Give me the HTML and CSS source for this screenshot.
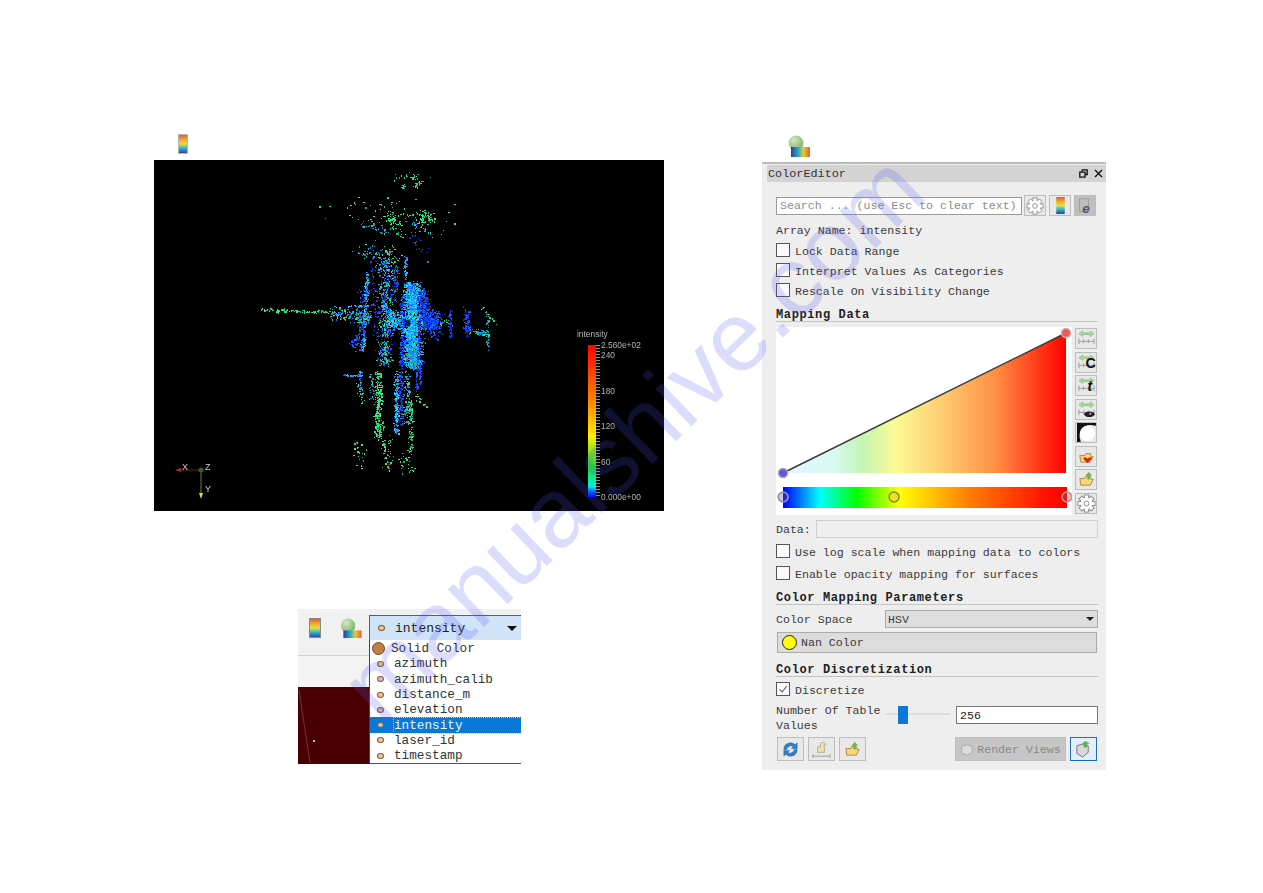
FILE: index.html
```html
<!DOCTYPE html>
<html lang="en">
<head>
<meta charset="utf-8">
<title>ColorEditor</title>
<link rel="stylesheet" href="styles.css">
</head>
<body>
<svg class="defs" width="0" height="0" aria-hidden="true">
  <defs>
    <linearGradient id="barIcon" x1="0" y1="0" x2="0" y2="1">
      <stop offset="0" stop-color="#d9593a"/><stop offset=".25" stop-color="#f2a32e"/><stop offset=".5" stop-color="#e9de3c"/><stop offset=".72" stop-color="#35b6c9"/><stop offset="1" stop-color="#2c3f9c"/>
    </linearGradient>
    <linearGradient id="mapIcon" x1="0" y1="0" x2="1" y2="0">
      <stop offset="0" stop-color="#2a3f9f"/><stop offset=".4" stop-color="#2fb0b8"/><stop offset=".65" stop-color="#e8c83c"/><stop offset="1" stop-color="#e2622e"/>
    </linearGradient>
    <radialGradient id="ballIcon" cx=".35" cy=".3" r=".8">
      <stop offset="0" stop-color="#d2eabf"/><stop offset="1" stop-color="#78ad66"/>
    </radialGradient>
    <linearGradient id="opacityFill" x1="783" y1="0" x2="1066" y2="0" gradientUnits="userSpaceOnUse">
      <stop offset="0" stop-color="#e8f2ff"/><stop offset=".17" stop-color="#dafbf6"/><stop offset=".28" stop-color="#c4f5b4"/><stop offset=".4" stop-color="#fbfb94"/><stop offset=".55" stop-color="#fdd074"/><stop offset=".75" stop-color="#ff9045"/><stop offset=".93" stop-color="#ff2a10"/><stop offset="1" stop-color="#ff0000"/>
    </linearGradient>
    <symbol id="gear" viewBox="-10 -10 20 20">
      <g fill="#fff" stroke="#8b8b8b" stroke-width="1">
        <rect x="-2.2" y="-9" width="4.4" height="5"/>
        <rect x="-2.2" y="-9" width="4.4" height="5" transform="rotate(45)"/>
        <rect x="-2.2" y="-9" width="4.4" height="5" transform="rotate(90)"/>
        <rect x="-2.2" y="-9" width="4.4" height="5" transform="rotate(135)"/>
        <rect x="-2.2" y="-9" width="4.4" height="5" transform="rotate(180)"/>
        <rect x="-2.2" y="-9" width="4.4" height="5" transform="rotate(225)"/>
        <rect x="-2.2" y="-9" width="4.4" height="5" transform="rotate(270)"/>
        <rect x="-2.2" y="-9" width="4.4" height="5" transform="rotate(315)"/>
        <circle r="6" stroke="none"/>
        <circle r="2.6"/>
      </g>
    </symbol>
    <symbol id="range" viewBox="0 0 20 20">
      <path d="M2 5 L6 2 V4 H14 V2 L18 5 L14 8 V6 H6 V8 Z" fill="#a9d69a" stroke="#86b878" stroke-width=".6"/>
      <path d="M2 10 V16 M2 13 H18 M7 11 V15 M12 11 V15 M18 10 V16" stroke="#9a9a9a" stroke-width="1" fill="none"/>
    </symbol>
    <symbol id="folder" viewBox="0 0 20 20">
      <path d="M4 16 L3 9 H8 L9 7 H14 L15 10 L17 10 L14 16 Z" fill="#f6d878" stroke="#a98a3c" stroke-width="1"/>
    </symbol>
  </defs>
</svg>

<div class="page">
  <div class="left-col">
    <div class="icon-row">
      <svg class="bar-icon" viewBox="0 0 10 20"><rect x=".5" y=".5" width="9" height="19" fill="url(#barIcon)" stroke="#b5b5b5"/></svg>
    </div>
    <div class="viewer">
      <canvas id="cloud" class="cloud" width="510" height="351"></canvas>
      <svg class="viewer-overlay" viewBox="0 0 510 351">
        <defs>
          <linearGradient id="legend" x1="0" y1="0" x2="0" y2="1">
            <stop offset="0" stop-color="#ff0000"/><stop offset=".36" stop-color="#ff8000"/><stop offset=".6" stop-color="#ffee00"/><stop offset=".8" stop-color="#20e020"/><stop offset=".93" stop-color="#00f0e0"/><stop offset=".97" stop-color="#0050ff"/><stop offset="1" stop-color="#0000ff"/>
          </linearGradient>
        </defs>
        <rect class="legend-bar" x="434" y="185" width="8" height="152" fill="url(#legend)"/>
        <line class="legend-ticks" x1="444" y1="185" x2="444" y2="337"/>
        <text class="legend-text" x="423" y="177">intensity</text>
        <text class="legend-text" x="447" y="188">2.560e+02</text>
        <text class="legend-text" x="447" y="198">240</text>
        <text class="legend-text" x="447" y="234">180</text>
        <text class="legend-text" x="447" y="269">120</text>
        <text class="legend-text" x="447" y="305">60</text>
        <text class="legend-text" x="447" y="340">0.000e+00</text>
        <line x1="23" y1="310" x2="47" y2="310" stroke="#7a1414" stroke-width="1"/>
        <path d="M21 310 L27 308 V312 Z" fill="#c02020"/>
        <line x1="47" y1="310" x2="47" y2="335" stroke="#77774a" stroke-width="1"/>
        <path d="M47 339 L45 333 H49 Z" fill="#e8e020"/>
        <circle cx="47" cy="310" r="2.5" fill="#1c6a24"/>
        <text class="axis-text" x="28" y="310">X</text>
        <text class="axis-text" x="51" y="310">Z</text>
        <text class="axis-text" x="51" y="332">Y</text>
      </svg>
    </div>
    <div class="shot">
      <div class="shot-side">
        <div class="shot-toolbar">
          <svg class="shot-bar" viewBox="0 0 12 20"><rect x=".5" y=".5" width="11" height="19" fill="url(#barIcon)" stroke="#8a8a8a"/></svg>
          <svg class="shot-map" viewBox="0 0 22 22"><circle cx="8" cy="8" r="7.5" fill="url(#ballIcon)"/><rect x="3" y="13" width="19" height="8" fill="url(#mapIcon)"/></svg>
        </div>
        <div class="shot-band"></div>
        <div class="shot-dark">
          <svg class="shot-dark-art" viewBox="0 0 71 77"><line x1="1" y1="3" x2="12" y2="76" stroke="#8a5a5a" stroke-width=".6"/><rect x="15" y="53" width="2" height="2" fill="#a8b8b8"/></svg>
        </div>
      </div>
      <div class="shot-menu">
        <div class="combo"><span class="dot"></span><span class="combo-text">intensity</span><span class="combo-arrow"></span></div>
        <ul class="list">
          <li class="item solid"><span class="solid-dot"></span>Solid Color</li>
          <li class="item"><span class="dot"></span>azimuth</li>
          <li class="item"><span class="dot pinkish"></span>azimuth_calib</li>
          <li class="item"><span class="dot"></span>distance_m</li>
          <li class="item"><span class="dot pinkish"></span>elevation</li>
          <li class="item selected"><span class="dot greyish"></span><span class="selected-text">intensity</span></li>
          <li class="item"><span class="dot"></span>laser_id</li>
          <li class="item"><span class="dot"></span>timestamp</li>
        </ul>
      </div>
    </div>
  </div>

  <div class="right-col">
    <svg class="map-icon" viewBox="0 0 22 22"><circle cx="8" cy="8" r="7.5" fill="url(#ballIcon)"/><rect x="3" y="12" width="19" height="10" fill="url(#mapIcon)"/></svg>
    <section class="panel">
      <header class="title-bar">
        <span>ColorEditor</span>
        <span class="title-icons">
          <svg class="float-icon" viewBox="0 0 9 9"><path d="M3 .8H8.2V5.5H6.5M.8 3.2H6V8.2H.8Z M3 .8V3 M.8 3.2H6" fill="none" stroke="#111" stroke-width="1.3"/></svg>
          <svg class="close-icon" viewBox="0 0 9 9"><path d="M1 1L8 8M8 1L1 8" stroke="#111" stroke-width="1.4"/></svg>
        </span>
      </header>
      <div class="panel-body">
        <div class="search-row">
          <div class="search">Search ... (use Esc to clear text)</div>
          <button class="btn b22"><svg class="ico18"><use href="#gear"/></svg></button>
          <button class="btn b22"><svg class="ico-bar" viewBox="0 0 10 20"><rect width="10" height="20" fill="url(#barIcon)"/></svg></button>
          <button class="btn b22 pressed"><svg class="ico18" viewBox="0 0 20 20"><rect x="4" y="2" width="10" height="14" fill="#bdbdbd" stroke="#9c9c9c"/><text class="e-glyph" x="7" y="18">e</text></svg></button>
        </div>
        <div class="text-row array">Array Name: intensity</div>
        <div class="check-row h20"><span class="check"></span>Lock Data Range</div>
        <div class="check-row h20"><span class="check"></span>Interpret Values As Categories</div>
        <div class="check-row h20"><span class="check"></span>Rescale On Visibility Change</div>
        <h2 class="heading h-map">Mapping Data</h2>

        <div class="chart-row">
          <div class="chart">
            <svg class="chart-svg" viewBox="776 327 296 188">
              <polygon points="783,473 1066,333 1066,473" fill="url(#opacityFill)"/>
              <line x1="783" y1="473" x2="1066" y2="333" stroke="#3a3a3a" stroke-width="1.5"/>
              <circle cx="783" cy="473" r="4.5" fill="#5a5ae0" stroke="#a5a5a5" stroke-width="1.5"/>
              <circle cx="1066" cy="333" r="4.5" fill="#f05a5a" stroke="#c8b0b0" stroke-width="1.5"/>
              <defs>
                <linearGradient id="ramp" x1="0" y1="0" x2="1" y2="0">
                  <stop offset="0" stop-color="#0000ff"/><stop offset=".13" stop-color="#00ffff"/><stop offset=".26" stop-color="#00ff00"/><stop offset=".41" stop-color="#ffff00"/><stop offset=".65" stop-color="#ff8000"/><stop offset=".93" stop-color="#ff1000"/><stop offset="1" stop-color="#ff0000"/>
                </linearGradient>
              </defs>
              <rect x="783" y="487" width="284" height="21" fill="url(#ramp)"/>
              <circle cx="783" cy="497" r="5" fill="#2a2ab8" stroke="#a0a0a0" stroke-width="1.5"/>
              <path d="M783 493a4 4 0 0 0 0 8z" fill="#c8c8e0"/>
              <circle cx="894" cy="497" r="5" fill="#e8e020" stroke="#8a8a40" stroke-width="1.5"/>
              <circle cx="1067" cy="497" r="5" fill="#e02020" stroke="#b0a0a0" stroke-width="1.5"/>
              <path d="M1067 493a4 4 0 0 1 0 8z" fill="#f0c0c0"/>
            </svg>
          </div>
          <div class="tools">
            <button class="btn tool"><svg class="ico20" viewBox="0 0 20 20"><use href="#range"/></svg></button>
            <button class="btn tool"><svg class="ico20" viewBox="0 0 20 20"><use href="#range"/><text class="tool-letter" x="9" y="16">C</text></svg></button>
            <button class="btn tool"><svg class="ico20" viewBox="0 0 20 20"><use href="#range"/><text class="tool-letter italic" x="11" y="16">t</text></svg></button>
            <button class="btn tool"><svg class="ico20" viewBox="0 0 20 20"><use href="#range"/><ellipse cx="13" cy="15" rx="5.5" ry="3" fill="#222"/><circle cx="14" cy="14.5" r="1" fill="#ccc"/></svg></button>
            <button class="btn tool"><svg class="ico20" viewBox="0 0 20 20"><path d="M0 20V0H20V3Q10 0 5 6Q1 12 4 20Z" fill="#111"/><circle cx="11" cy="11" r="8" fill="#fff"/></svg></button>
            <button class="btn tool"><svg class="ico20" viewBox="0 0 20 20"><use href="#folder"/><path d="M11 17 L7 13 Q6 10 9 11 L11 12 L13 11 Q17 10 15 13 Z" fill="#d8231e"/></svg></button>
            <button class="btn tool"><svg class="ico20" viewBox="0 0 20 20"><use href="#folder"/><path d="M11 10 V6 H8.5 L12.5 2 L16 6 H13.5 V10 Z" fill="#6db24e"/></svg></button>
            <button class="btn tool"><svg class="ico20"><use href="#gear"/></svg></button>
          </div>
        </div>

        <div class="data-row"><span class="data-label">Data:</span><div class="data-field"></div></div>
        <div class="check-row h22 first"><span class="check"></span>Use log scale when mapping data to colors</div>
        <div class="check-row h22"><span class="check"></span>Enable opacity mapping for surfaces</div>
        <h2 class="heading h-param">Color Mapping Parameters</h2>
        <div class="space-row">
          <span class="space-label">Color Space</span>
          <div class="select">HSV<span class="select-arrow"></span></div>
        </div>
        <div class="nan"><span class="nan-dot"></span>Nan Color</div>
        <h2 class="heading h-disc">Color Discretization</h2>
        <div class="check-row h20 disc"><span class="check"><svg class="tick" viewBox="0 0 14 14"><path d="M3 7.5L6 10.5L11.5 3.5" fill="none" stroke="#555" stroke-width="1.2"/></svg></span>Discretize</div>
        <div class="table-row">
          <div class="table-label">Number Of Table Values</div>
          <div class="slider"><span class="slider-track"></span><span class="slider-thumb"></span></div>
          <div class="number">256</div>
        </div>
        <div class="bottom-row">
          <button class="btn bb"><svg class="ico20" viewBox="0 0 20 20"><path d="M3 10A7 7 0 0 1 15 5L17 3V9H11L13 7A4.5 4.5 0 0 0 6 10Z" fill="#2f7fc8" stroke="#1b5c9c" stroke-width=".5"/><path d="M17 10A7 7 0 0 1 5 15L3 17V11H9L7 13A4.5 4.5 0 0 0 14 10Z" fill="#2f7fc8" stroke="#1b5c9c" stroke-width=".5"/></svg></button>
          <button class="btn bb"><svg class="ico20" viewBox="0 0 20 20"><path d="M6 13V7H9V4L12 2L15 5H13V13Z" fill="#e9e0b8" stroke="#a09a70" stroke-width=".7"/><path d="M1 15V19M1 17H19M19 15V19" stroke="#9a9a9a" fill="none"/></svg></button>
          <button class="btn bb"><svg class="ico20" viewBox="0 0 20 20"><use href="#folder"/><path d="M11 10 V6 H8.5 L12.5 2 L16 6 H13.5 V10 Z" fill="#6db24e"/></svg></button>
          <button class="btn render"><svg class="ico14" viewBox="0 0 16 16"><path d="M2 4L8 2L14 4V11L8 14L2 11Z" fill="#dcdcdc" stroke="#a8a8a8"/></svg>Render Views</button>
          <button class="btn active"><svg class="ico20" viewBox="0 0 20 20"><path d="M3 6L10 4L15 6V13L9 18L3 14Z" fill="#d8d8d8" stroke="#777"/><path d="M10 8V4H8L12 1L17 4H14V8Z" fill="#5fae55"/></svg></button>
        </div>
      </div>
    </section>
  </div>
</div>
<div class="watermark">manualshive.com</div>
<script src="cloud.js"></script>
</body>
</html>
```
FILE: styles.css
```css
* { box-sizing: border-box; }
html, body { margin: 0; padding: 0; background: #fff; }
body { width: 1263px; height: 893px; overflow: hidden; position: relative; font-family: "Liberation Mono", "DejaVu Sans Mono", monospace; color: #3a3a3a; }
.defs { position: absolute; }
.page { display: flex; padding-left: 154px; }

.left-col { width: 510px; margin-right: 98px; padding-top: 134px; }
.icon-row { height: 26px; padding-left: 24px; }
.bar-icon { display: block; width: 10px; height: 20px; }
.viewer { position: relative; width: 510px; height: 351px; background: #000; overflow: hidden; }
.cloud { display: block; filter: blur(.45px); }
.viewer-overlay { position: absolute; left: 0; top: 0; width: 510px; height: 351px; }
.legend-ticks { stroke: #8c8c8c; stroke-width: 4; stroke-dasharray: 1 2; }
.legend-text { font: 8.4px "Liberation Sans", Arial, sans-serif; fill: #b4b4b4; }
.axis-text { font: 9px "Liberation Sans", Arial, sans-serif; fill: #c8c8c8; }

.shot { display: flex; width: 223px; height: 155px; margin: 98px 0 0 144px; overflow: hidden; }
.shot-side { width: 71px; display: flex; flex-direction: column; }
.shot-toolbar { height: 46px; background: #f1f1f1; display: flex; align-items: flex-start; padding: 9px 0 0 11px; gap: 19px; }
.shot-bar { width: 12px; height: 20px; }
.shot-map { width: 22px; height: 21px; }
.shot-band { height: 32px; background: #f3f3f3; border-top: 1px solid #cfcfcf; }
.shot-dark { flex: 1; background: #4a0000; }
.shot-dark-art { display: block; width: 71px; height: 77px; }
.shot-menu { width: 152px; padding-top: 6px; background: #f1f1f1; display: flex; flex-direction: column; }
.combo { height: 25px; display: flex; align-items: center; padding-left: 8px; background: #cfe4f8; border-top: 1px solid #2a6aa0; border-left: 1px solid #2a6aa0; font-size: 13px; color: #222; }
.combo-text { margin-left: 10px; flex: 1; }
.combo-arrow { width: 0; height: 0; margin-right: 4px; border-left: 5px solid transparent; border-right: 5px solid transparent; border-top: 5px solid #111; }
.dot { flex: none; width: 7px; height: 6px; border-radius: 50%; background: #f0c890; border: 1px solid #7a5a3a; }
.dot.pinkish { background: #e0b8c8; }
.dot.greyish { background: #b8c8c8; }
.list { list-style: none; margin: 0; padding: 1px 0 0; flex: 1; background: #fff; border-left: 1px solid #444; border-bottom: 1px solid #555; overflow: hidden; }
.item { height: 15.3px; display: flex; align-items: center; padding-left: 7px; font-size: 12.7px; line-height: 15px; color: #333; }
.item .dot { margin-right: 10px; }
.item.solid { padding-left: 2px; }
.solid-dot { flex: none; width: 13px; height: 13px; margin-right: 6px; border-radius: 50%; background: #bf7f42; border: 1px solid #6a4a2a; }
.item.selected { background: #0a78d7; color: #e8f4ff; }
.selected-text { outline: 1px dotted #9cc8f0; outline-offset: 0; flex: 1; }

.right-col { width: 344px; padding-top: 135px; }
.map-icon { display: block; width: 22px; height: 22px; margin: 0 0 5px 26px; }
.panel { background: #eeeeee; border-top: 2px solid #bcbcbc; padding-top: 1px; padding-bottom: 9px; }
.title-bar { height: 17px; margin-left: 5px; padding: 0 3px 0 1px; background: #d3d3d3; display: flex; justify-content: space-between; align-items: center; font-size: 11.8px; color: #333; }
.title-icons { display: flex; gap: 6px; align-items: center; }
.float-icon, .close-icon { width: 9px; height: 9px; display: block; }
.panel-body { padding: 0 8px 0 14px; font-size: 11.6px; }

.btn { margin: 0; padding: 0; border: 1px solid #bdbdbd; background: #e8e8e8; display: flex; align-items: center; justify-content: center; font: inherit; }
.ico18 { width: 18px; height: 18px; }
.ico20 { width: 19px; height: 19px; }
.ico14 { width: 14px; height: 14px; margin-right: 3px; }
.ico-bar { width: 9px; height: 17px; }
.search-row { display: flex; align-items: center; height: 21px; margin-top: 13px; }
.search { width: 246px; height: 18px; margin-right: 2px; padding-left: 3px; background: #fff; border: 1px solid #9a9a9a; line-height: 16px; color: #8c8c8c; white-space: nowrap; }
.b22 { width: 22px; height: 21px; margin-right: 3px; }
.b22.pressed { background: #bfbfbf; margin-right: 0; }
.e-glyph { font: italic bold 15px "Liberation Sans", sans-serif; fill: #4a5a6a; }
.text-row { height: 16px; line-height: 16px; }
.array { margin-top: 7px; margin-bottom: 1px; }
.check-row { display: flex; align-items: center; padding-top: 2px; white-space: nowrap; }
.h20 { height: 20px; }
.h22 { height: 22px; }
.check { flex: none; width: 14px; height: 14px; margin: 0 5px 2px 0; background: #fafafa; border: 1px solid #555; display: block; }
.tick { display: block; width: 12px; height: 12px; }
.heading { margin: 0; height: 15px; line-height: 17px; font-size: 12px; letter-spacing: .62px; font-weight: 700; color: #222; border-bottom: 1px solid #c4c4c4; white-space: nowrap; }
.h-map { margin-top: 7px; }
.h-param { margin-top: 6px; }
.h-disc { margin-top: 9px; }

.chart-row { display: flex; gap: 3px; margin-top: 5px; height: 188px; }
.chart { width: 296px; height: 188px; background: #fff; }
.chart-svg { display: block; width: 296px; height: 188px; }
.tools { display: flex; flex-direction: column; gap: 2.5px; padding-top: 1px; }
.tool { width: 22px; height: 21px; }
.tool-letter { font: bold 15px "Liberation Sans", sans-serif; fill: #111; }
.tool-letter.italic { font-style: italic; }
.data-row { display: flex; align-items: center; height: 18px; margin-top: 5px; }
.data-label { width: 40px; padding-top: 1px; }
.data-field { flex: 1; height: 18px; background: #efefef; border: 1px solid #cfcfcf; }
.first { margin-top: 2px; }
.space-row { display: flex; align-items: center; height: 18px; margin-top: 5px; }
.space-label { width: 109px; }
.select { flex: 1; height: 18px; padding-left: 2px; display: flex; align-items: center; justify-content: space-between; background: #dedede; border: 1px solid #ababab; }
.select-arrow { width: 0; height: 0; margin-right: 3px; border-left: 4px solid transparent; border-right: 4px solid transparent; border-top: 4px solid #222; }
.nan { display: flex; align-items: center; height: 21px; margin: 4px 1px 0; padding-left: 4px; background: #dcdcdc; border: 1px solid #ababab; }
.nan-dot { width: 15px; height: 15px; margin-right: 4px; border-radius: 50%; background: #ffff00; border: 1px solid #222; }
.disc { margin-top: 2px; }
.table-row { display: flex; align-items: flex-start; height: 30px; margin-top: 3px; }
.table-label { width: 109px; padding-top: 1px; line-height: 15px; }
.slider { position: relative; width: 65px; height: 18px; margin: 4px 6px 0 0; }
.slider-track { position: absolute; left: 0; right: 0; top: 7px; height: 2px; background: #dcdcdc; }
.slider-thumb { position: absolute; left: 13px; top: 0; width: 10px; height: 18px; background: #0a78d7; }
.number { flex: 1; height: 18px; margin-top: 4px; padding-left: 3px; background: #fff; border: 1px solid #777; line-height: 17px; color: #222; }
.bottom-row { display: flex; align-items: center; height: 24px; margin-top: 5px; padding-left: 1px; gap: 4px; }
.bb { width: 27px; height: 24px; }
.render { width: 111px; height: 24px; margin-left: auto; padding-top: 1px; background: #c6c6c6; border-color: #c0c0c0; color: #8a8a8a; }
.active { width: 27px; height: 24px; margin-right: 1px; background: #e2eefb; border: 1px solid #1a70b8; }

.watermark { position: absolute; left: 632px; top: 437px; transform: translate(-50%, -50%) rotate(-44deg); font: 98px "Liberation Sans", Arial, sans-serif; color: rgba(80, 80, 240, .2); white-space: nowrap; pointer-events: none; }
```
FILE: cloud.js
```js
(function () {
  var canvas = document.getElementById("cloud");
  var ctx = canvas.getContext("2d");
  var seed = 48271;
  function rnd() { seed = (seed * 16807) % 2147483647; return seed / 2147483647; }
  function gauss() { return (rnd() + rnd() + rnd() - 1.5) / 0.75; }
  var P = {
    g: ["#20e070", "#30f080", "#18b868", "#40e0a0"],
    b: ["#1038f0", "#1050ff", "#0828c0", "#1870ff"],
    c: ["#10a8ff", "#20d0f0", "#1090ff", "#30e0d0", "#1060ff"],
    m: ["#1050ff", "#10a0ff", "#20d0c0", "#20e080", "#0838d0"],
    t: ["#10a0e0", "#20c0a0", "#1880f0", "#30e090"]
  };
  // x1, y1, x2, y2, spreadX, spreadY, count, palette
  var S = [
    [398,177,422,177,9,3,24,"g"],[417,184,418,184,3,2,22,"g"],[403,187,404,187,2,2,12,"g"],
    [355,205,430,225,28,12,80,"g"],[392,218,394,220,8,6,50,"g"],[424,215,426,219,6,5,60,"g"],
    [412,222,430,233,1,1,18,"t"],[360,222,385,232,5,2,26,"t"],[395,232,405,238,4,2,10,"g"],
    [362,247,396,262,10,7,70,"t"],[388,248,392,262,6,5,30,"g"],[415,235,428,262,5,6,18,"b"],
    [367,272,362,352,1.5,2,170,"c"],[365,285,358,350,5,2,90,"b"],
    [386,262,384,365,6,2,500,"m"],[396,268,394,300,2,2,60,"b"],[405,255,405,285,1,2,36,"c"],[372,262,376,340,3,3,60,"b"],
    [412,283,412,365,7,2,1500,"c"],[410,290,412,340,4,2,350,"c"],[412,345,412,368,5,2,240,"t"],
    [402,295,400,425,1.8,2,300,"b"],[422,290,426,330,4,2,280,"b"],[420,295,416,392,.7,2,130,"b"],
    [433,322,434,323,6,9,240,"b"],[393,320,394,320,7,6,200,"c"],[440,325,450,320,3,3,14,"g"],
    [260,309,330,312,1,1.3,95,"g"],[330,312,370,318,1,5,150,"t"],[348,306,368,306,.3,.5,28,"c"],
    [362,320,352,345,2,2,45,"b"],
    [450,310,450,337,1.4,2,55,"b"],[466,308,468,335,2.5,3,85,"b"],[470,330,486,334,2,2,40,"t"],[487,310,487,350,1.5,2,30,"t"],[480,305,495,322,2,2,12,"g"],
    [343,375,362,375,.3,.6,40,"c"],[360,370,360,390,.7,1,28,"c"],
    [378,372,378,440,3,2,230,"g"],[358,385,362,405,3,2,18,"g"],[370,372,372,400,2,2,24,"t"],
    [396,372,396,432,2,2,170,"c"],[407,372,406,425,2.5,2,90,"t"],[420,365,420,385,.8,2,36,"b"],[416,395,424,405,3,2,16,"g"],
    [410,398,410,450,2,2,85,"g"],[383,425,387,470,6,2,50,"g"],[358,440,360,470,6,3,20,"g"],[400,450,410,472,7,2,28,"g"]
  ];
  S.forEach(function (s) {
    var pal = P[s[7]];
    for (var i = 0; i < s[6]; i++) {
      var k = rnd();
      var x = s[0] + (s[2] - s[0]) * k + gauss() * s[4];
      var y = s[1] + (s[3] - s[1]) * k + gauss() * s[5];
      ctx.fillStyle = pal[Math.floor(rnd() * pal.length)];
      ctx.fillRect(Math.round(x) - 154, Math.round(y) - 160, rnd() < 0.35 ? 2 : 1, rnd() < 0.25 ? 2 : 1);
    }
  });
  ctx.fillStyle = "#00184a";
  ctx.beginPath();
  ctx.ellipse(408 - 154, 323 - 160, 2.5, 3.5, 0, 0, Math.PI * 2);
  ctx.fill();
  ctx.fillStyle = "#c02030";
  ctx.fillRect(388 - 154, 464 - 160, 3, 1);
})();
```
